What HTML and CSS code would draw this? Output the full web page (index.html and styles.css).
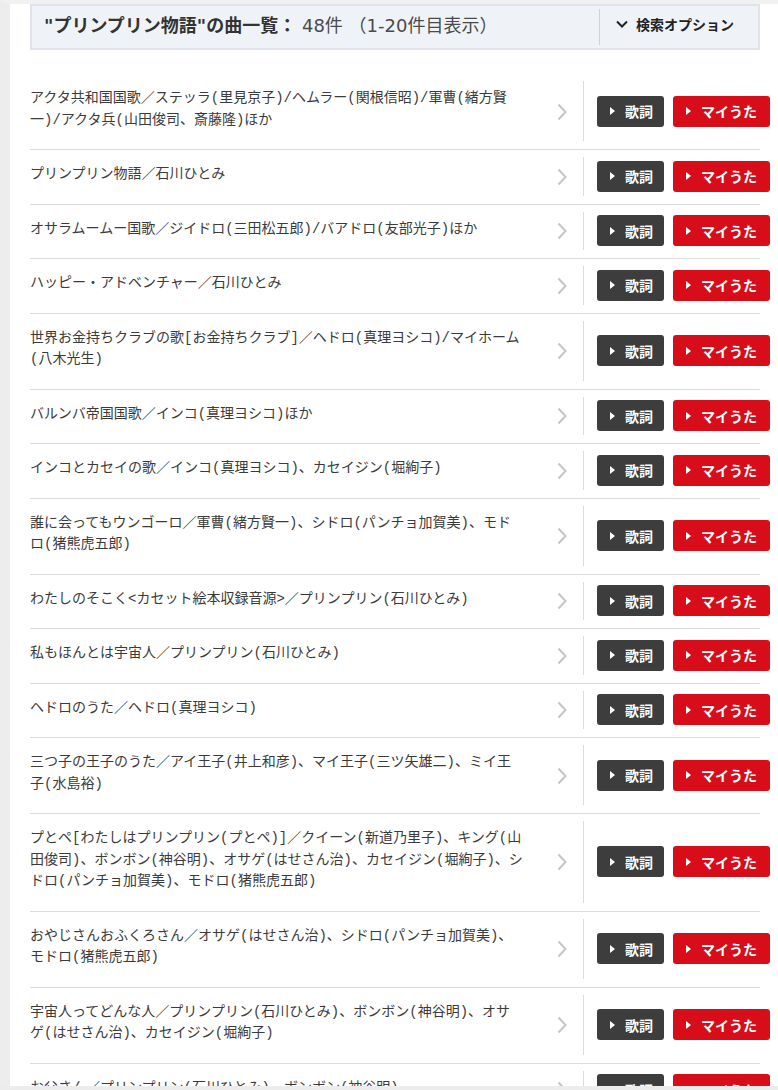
FILE: index.html
```html
<html>
    <head>
        <meta charset="utf-8">
        <link rel="stylesheet" href="styles.css">
    </head>
    <body onload="buildSongs()">
        <div class="page">
            <div class="resultHead">
                <h2 class="resultTitle"><strong>"プリンプリン物語"の曲一覧：</strong> 48件 （1-20件目表示）</h2>
                <div class="optionToggle">
                    <svg width="12" height="8" viewBox="0 0 12 8"><polyline points="1,1.5 6,6.5 11,1.5" fill="none" stroke="#222" stroke-width="2"/></svg>
                    検索オプション
                </div>
            </div>

            <ul class="songList" id="songList"></ul>
        </div>
        <div class="frameBottom"></div>

        <script>
            var songs = [
                'アクタ共和国国歌／ステッラ(里見京子)/ヘムラー(関根信昭)/軍曹(緒方賢一)/アクタ兵(山田俊司、斎藤隆)ほか',
                'プリンプリン物語／石川ひとみ',
                'オサラムームー国歌／ジイドロ(三田松五郎)/バアドロ(友部光子)ほか',
                'ハッピー・アドベンチャー／石川ひとみ',
                '世界お金持ちクラブの歌[お金持ちクラブ]／ヘドロ(真理ヨシコ)/マイホーム(八木光生)',
                'バルンバ帝国国歌／インコ(真理ヨシコ)ほか',
                'インコとカセイの歌／インコ(真理ヨシコ)、カセイジン(堀絢子)',
                '誰に会ってもウンゴーロ／軍曹(緒方賢一)、シドロ(パンチョ加賀美)、モドロ(猪熊虎五郎)',
                'わたしのそこく&lt;カセット絵本収録音源&gt;／プリンプリン(石川ひとみ)',
                '私もほんとは宇宙人／プリンプリン(石川ひとみ)',
                'ヘドロのうた／ヘドロ(真理ヨシコ)',
                '三つ子の王子のうた／アイ王子(井上和彦)、マイ王子(三ツ矢雄二)、ミイ王子(水島裕)',
                'プとペ[わたしはプリンプリン(プとペ)]／クイーン(新道乃里子)、キング(山田俊司)、ボンボン(神谷明)、オサゲ(はせさん治)、カセイジン(堀絢子)、シドロ(パンチョ加賀美)、モドロ(猪熊虎五郎)',
                'おやじさんおふくろさん／オサゲ(はせさん治)、シドロ(パンチョ加賀美)、モドロ(猪熊虎五郎)',
                '宇宙人ってどんな人／プリンプリン(石川ひとみ)、ボンボン(神谷明)、オサゲ(はせさん治)、カセイジン(堀絢子)',
                'お父さん／プリンプリン(石川ひとみ)、ボンボン(神谷明)'
            ];

            function buildSongs() {
                var list = document.getElementById('songList');
                var html = '';
                for (var i = 0; i < songs.length; i++) {
                    html += '<li class="song">'
                        + '<a class="songLink"><span class="songName">' + songs[i] + '</span>'
                        + '<svg class="songArrow" width="10" height="18" viewBox="0 0 10 18"><polyline points="1.5,1.5 8.5,9 1.5,16.5" fill="none" stroke="#c6c6c6" stroke-width="2"/></svg></a>'
                        + '<div class="songActions">'
                        + '<a class="btn btnLyric">歌詞</a>'
                        + '<a class="btn btnMyuta">マイうた</a>'
                        + '</div></li>';
                }
                list.innerHTML = html;
            }
        </script>
    </body>
</html>
```
FILE: styles.css
```css
body {
    margin: 0;
    font-family: "DejaVu Sans", "Noto Sans CJK JP", sans-serif;
    color: #3b3b3b;
    background-color: #fff;
}

.page {
    border-left: 10px solid #ededed;
    border-top: 4px solid #f1f1f1;
    padding: 0 18px 0 20px;
}

/* header bar */
.resultHead {
    display: flex;
    align-items: center;
    height: 42px;
    background-color: #eff3f7;
    border: 2px solid #dfe4ea;
    margin-bottom: 24px;
}
.resultTitle {
    flex: 1;
    margin: 0 0 6px;
    padding-left: 12px;
    font-size: 18px;
    font-weight: normal;
    color: #4a4a4a;
    white-space: nowrap;
}
.resultTitle strong {
    color: #333;
}
.optionToggle {
    display: flex;
    align-items: center;
    align-self: stretch;
    width: 142px;
    margin: 3px 0;
    padding: 0 0 6px 16px;
    border-left: 1px solid #cfd3d8;
    font-size: 14px;
    font-weight: bold;
    color: #222;
}
.optionToggle svg {
    margin-right: 8px;
}

/* song rows */
.songList {
    list-style: none;
    margin: 0;
    padding: 0;
}
.song {
    display: flex;
    border-bottom: 1px solid #dcdcdc;
}
.songLink {
    display: flex;
    align-items: center;
    flex: none;
    width: 553px;
    padding: 14px 0;
    font-family: "Liberation Mono", "Noto Sans CJK JP", monospace;
    font-size: 14px;
    line-height: 21.5px;
}
.songName {
    width: 494px;
    flex: none;
    padding-bottom: 4px;
}
.songArrow {
    flex: none;
    margin-left: 33px;
}
.songActions {
    display: flex;
    align-items: center;
    flex: none;
    gap: 9px;
    margin: 7px 0 8px;
    padding-left: 13px;
    border-left: 1px solid #dcdcdc;
}

.btn {
    display: flex;
    align-items: center;
    height: 31px;
    padding-left: 13px;
    box-sizing: border-box;
    border-radius: 3px;
    color: #fff;
    font-size: 14px;
    font-weight: bold;
}
.btn::before {
    content: "";
    border-left: 5px solid #fff;
    border-top: 4px solid transparent;
    border-bottom: 4px solid transparent;
    margin-right: 10px;
}
.btnLyric {
    width: 67px;
    background-color: #3d3d3d;
}
.btnMyuta {
    width: 97px;
    background-color: #d70e1a;
}

.frameBottom {
    position: fixed;
    left: 0;
    right: 0;
    bottom: 0;
    height: 4px;
    background-color: #ececec;
}
```
